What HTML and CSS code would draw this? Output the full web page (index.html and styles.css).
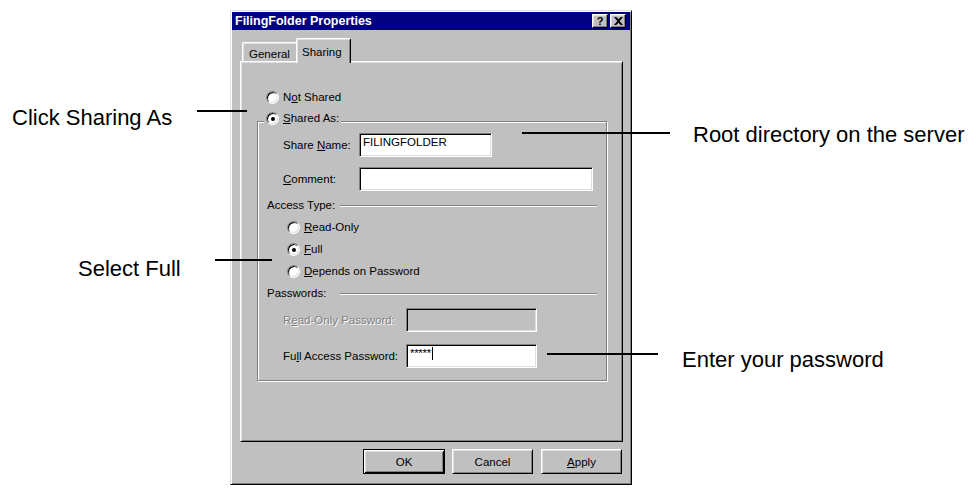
FILE: index.html
```html
<!DOCTYPE html>
<html>
<head>
<meta charset="utf-8">
<title>FilingFolder Properties</title>
<link rel="stylesheet" href="styles.css">
</head>
<body>
<div class="canvas">
  <div class="dialog">
    <div class="titlebar">
      <span class="title">FilingFolder Properties</span>
      <div class="tb-buttons">
        <span class="tb-btn help">?</span>
        <span class="tb-btn close"><svg width="9" height="8" viewBox="0 0 8 7"><path d="M0 0h2l2 2 2-2h2L5 3.5 8 7H6L4 5 2 7H0l3-3.5z" fill="#000"/></svg></span>
      </div>
    </div>
    <div class="dlg-body">
      <div class="tabs">
        <div class="tab">General</div>
        <div class="tab active">Sharing</div>
      </div>
      <div class="panel">
        <div class="opt top-opt"><span class="radio"></span><span>N<u>o</u>t Shared</span></div>
        <fieldset class="group">
          <legend class="legend"><span class="radio on"></span><span><u>S</u>hared As:</span></legend>
          <div class="frow"><label>Share <u>N</u>ame:</label><div class="field w133">FILINGFOLDER</div></div>
          <div class="frow gap10"><label><u>C</u>omment:</label><div class="field w234"></div></div>
          <div class="section s1"><span class="sec-label">Access Type:</span><span class="etch"></span></div>
          <div class="opt sub"><span class="radio"></span><span><u>R</u>ead-Only</span></div>
          <div class="opt sub"><span class="radio on"></span><span><u>F</u>ull</span></div>
          <div class="opt sub"><span class="radio"></span><span><u>D</u>epends on Password</span></div>
          <div class="section s2"><span class="sec-label">Passwords:</span><span class="etch"></span></div>
          <div class="frow pw pw1"><label class="disabled">R<u>e</u>ad-Only Password:</label><div class="field disabled w131"></div></div>
          <div class="frow pw pw2"><label>Fu<u>l</u>l Access Password:</label><div class="field w131"><span class="stars">*****</span><span class="caret"></span></div></div>
        </fieldset>
      </div>
      <div class="buttons">
        <div class="btn default">OK</div>
        <div class="btn">Cancel</div>
        <div class="btn apply"><u>A</u>pply</div>
      </div>
    </div>
  </div>

  <div class="note n1">Click Sharing As</div>
  <div class="lead l1"></div>
  <div class="note n2">Select Full</div>
  <div class="lead l2"></div>
  <div class="note n3">Root directory on the server</div>
  <div class="lead l3"></div>
  <div class="note n4">Enter your password</div>
  <div class="lead l4"></div>
</div>
</body>
</html>
```

FILE: styles.css
```css
body {
  margin: 0;
  background: #fff;
}

.canvas {
  position: relative;
  width: 976px;
  height: 490px;
  overflow: hidden;
  box-sizing: border-box;
  padding: 10px 0 0 230px;
}

.dialog {
  width: 402px;
  box-sizing: border-box;
  background: #c0c0c0;
  border: 1px solid;
  border-color: #dfdfdf #000 #000 #dfdfdf;
  box-shadow: inset 1px 1px #fff, inset -1px -1px #808080;
  padding: 1px;
  font-family: "Liberation Sans", Arial, sans-serif;
  font-size: 11.5px;
  color: #000;
}

.titlebar {
  height: 18px;
  background: #000080;
  display: flex;
  align-items: center;
  justify-content: space-between;
  padding: 0 4px 0 3px;
}

.title {
  color: #fff;
  font-weight: bold;
  font-size: 12.5px;
  white-space: nowrap;
}

.tb-buttons {
  display: flex;
  gap: 2px;
}

.tb-btn {
  width: 16px;
  height: 14px;
  box-sizing: border-box;
  background: #c0c0c0;
  border: 1px solid;
  border-color: #fff #000 #000 #fff;
  box-shadow: inset -1px -1px #808080, inset 1px 1px #dfdfdf;
  display: flex;
  align-items: center;
  justify-content: center;
  font-weight: bold;
  font-size: 11px;
  line-height: 1;
}

.tb-btn svg {
  display: block;
}

.dlg-body {
  padding: 8px 7px 9px 8px;
}

.tabs {
  display: flex;
  align-items: flex-start;
  height: 25px;
  margin-bottom: -2px;
  padding-left: 2px;
  position: relative;
  z-index: 1;
}

.tab {
  box-sizing: border-box;
  height: 19px;
  margin-top: 4px;
  width: 56px;
  padding: 3px 0 0 6px;
  line-height: 16px;
  background: #c0c0c0;
  border-left: 1px solid #fff;
  border-top: 1px solid #fff;
  border-right: 1px solid #000;
  border-radius: 2px 2px 0 0;
  box-shadow: inset 1px 1px #dfdfdf, inset -1px 0 #808080;
  white-space: nowrap;
}

.tab.active {
  height: 25px;
  margin-top: 0;
  width: 55px;
  margin-left: -2px;
  padding: 5px 0 0 5px;
  position: relative;
  z-index: 2;
}

.panel {
  height: 381px;
  box-sizing: border-box;
  border: 1px solid;
  border-color: #fff #000 #000 #fff;
  box-shadow: inset 1px 1px #dfdfdf, inset -1px -1px #808080;
  padding: 29px 0 0 16px;
}

.opt {
  display: flex;
  align-items: center;
  gap: 4px;
  height: 13px;
  line-height: 13px;
  white-space: nowrap;
}

.top-opt {
  margin-left: 9px;
}

.radio {
  width: 13px;
  height: 13px;
  flex: none;
  box-sizing: border-box;
  border-radius: 50%;
  background: #fff;
  border: 1px solid;
  border-color: #808080 #fff #fff #808080;
  box-shadow: inset 1px 1px #000, inset -1px -1px #dfdfdf;
  display: flex;
  align-items: center;
  justify-content: center;
}

.radio.on::after {
  content: "";
  width: 4px;
  height: 4px;
  border-radius: 50%;
  background: #000;
}

.group {
  width: 350px;
  min-width: 0;
  box-sizing: border-box;
  margin: 8px 0 0 0;
  padding: 3px 9px 12px 6px;
  border: 1px solid #808080;
  box-shadow: inset 1px 1px #fff, 1px 1px #fff;
}

.legend {
  display: flex;
  align-items: center;
  gap: 4px;
  height: 13px;
  line-height: 13px;
  padding: 0 2px 5px;
  margin: 0;
  background: #c0c0c0;
  white-space: nowrap;
}

.frow {
  display: grid;
  grid-template-columns: 76px auto;
  justify-content: start;
  align-items: center;
  margin-left: 19px;
}

.frow label {
  white-space: nowrap;
}

.frow.gap10 {
  margin-top: 10px;
}

.frow.pw {
  grid-template-columns: 123px auto;
}

.frow.pw1 {
  margin-top: 8px;
}

.frow.pw2 {
  margin-top: 12px;
}

label.disabled {
  color: #808080;
  text-shadow: 1px 1px #fff;
}

.field {
  box-sizing: border-box;
  height: 24px;
  background: #fff;
  border: 1px solid;
  border-color: #808080 #fff #fff #808080;
  box-shadow: inset 1px 1px #000, inset -1px -1px #dfdfdf;
  padding: 2px 0 0 3px;
  line-height: 13px;
  white-space: nowrap;
  display: flex;
  align-items: flex-start;
}

.field.disabled {
  background: #c0c0c0;
}

.w133 { width: 133px; }
.w234 { width: 234px; }
.w131 { width: 131px; }

.stars {
  letter-spacing: -0.3px;
}

.caret {
  width: 0;
  height: 13px;
  border-left: 1px solid #000;
  margin-left: 1px;
}

.section {
  display: flex;
  align-items: center;
  height: 13px;
  line-height: 13px;
  margin-left: 3px;
  white-space: nowrap;
}

.section.s1 {
  margin-top: 8px;
}

.section.s2 {
  margin-top: 9px;
}

.sec-label {
  width: 73px;
  flex: none;
}

.etch {
  flex: 1;
  height: 0;
  border-top: 1px solid #808080;
  border-bottom: 1px solid #fff;
}

.sub {
  margin-top: 9px;
  margin-left: 23px;
}

.buttons {
  display: flex;
  justify-content: flex-end;
  gap: 7px;
  margin-top: 7px;
  padding-right: 1px;
}

.btn {
  box-sizing: border-box;
  width: 81px;
  height: 25px;
  display: flex;
  align-items: center;
  justify-content: center;
  background: #c0c0c0;
  border: 1px solid;
  border-color: #fff #000 #000 #fff;
  box-shadow: inset 1px 1px #dfdfdf, inset -1px -1px #808080;
}

.btn.default {
  width: 82px;
  border-color: #000;
  box-shadow: inset 1px 1px #fff, inset -1px -1px #000, inset 2px 2px #dfdfdf, inset -2px -2px #808080;
}

.btn.apply {
  margin-left: 1px;
}

/* callout annotations */
.note {
  position: absolute;
  font-family: "Liberation Sans", Arial, sans-serif;
  font-size: 22px;
  line-height: 22px;
  color: #000;
  white-space: nowrap;
}

.n1 { left: 12px; top: 107px; }
.n2 { left: 78px; top: 258px; }
.n3 { left: 693px; top: 124px; }
.n4 { left: 682px; top: 349px; }

.lead {
  position: absolute;
  height: 2px;
  background: #000;
}

.l1 { left: 197px; top: 110px; width: 50px; }
.l2 { left: 215px; top: 259px; width: 57px; }
.l3 { left: 522px; top: 132px; width: 148px; }
.l4 { left: 547px; top: 353px; width: 111px; }
```
